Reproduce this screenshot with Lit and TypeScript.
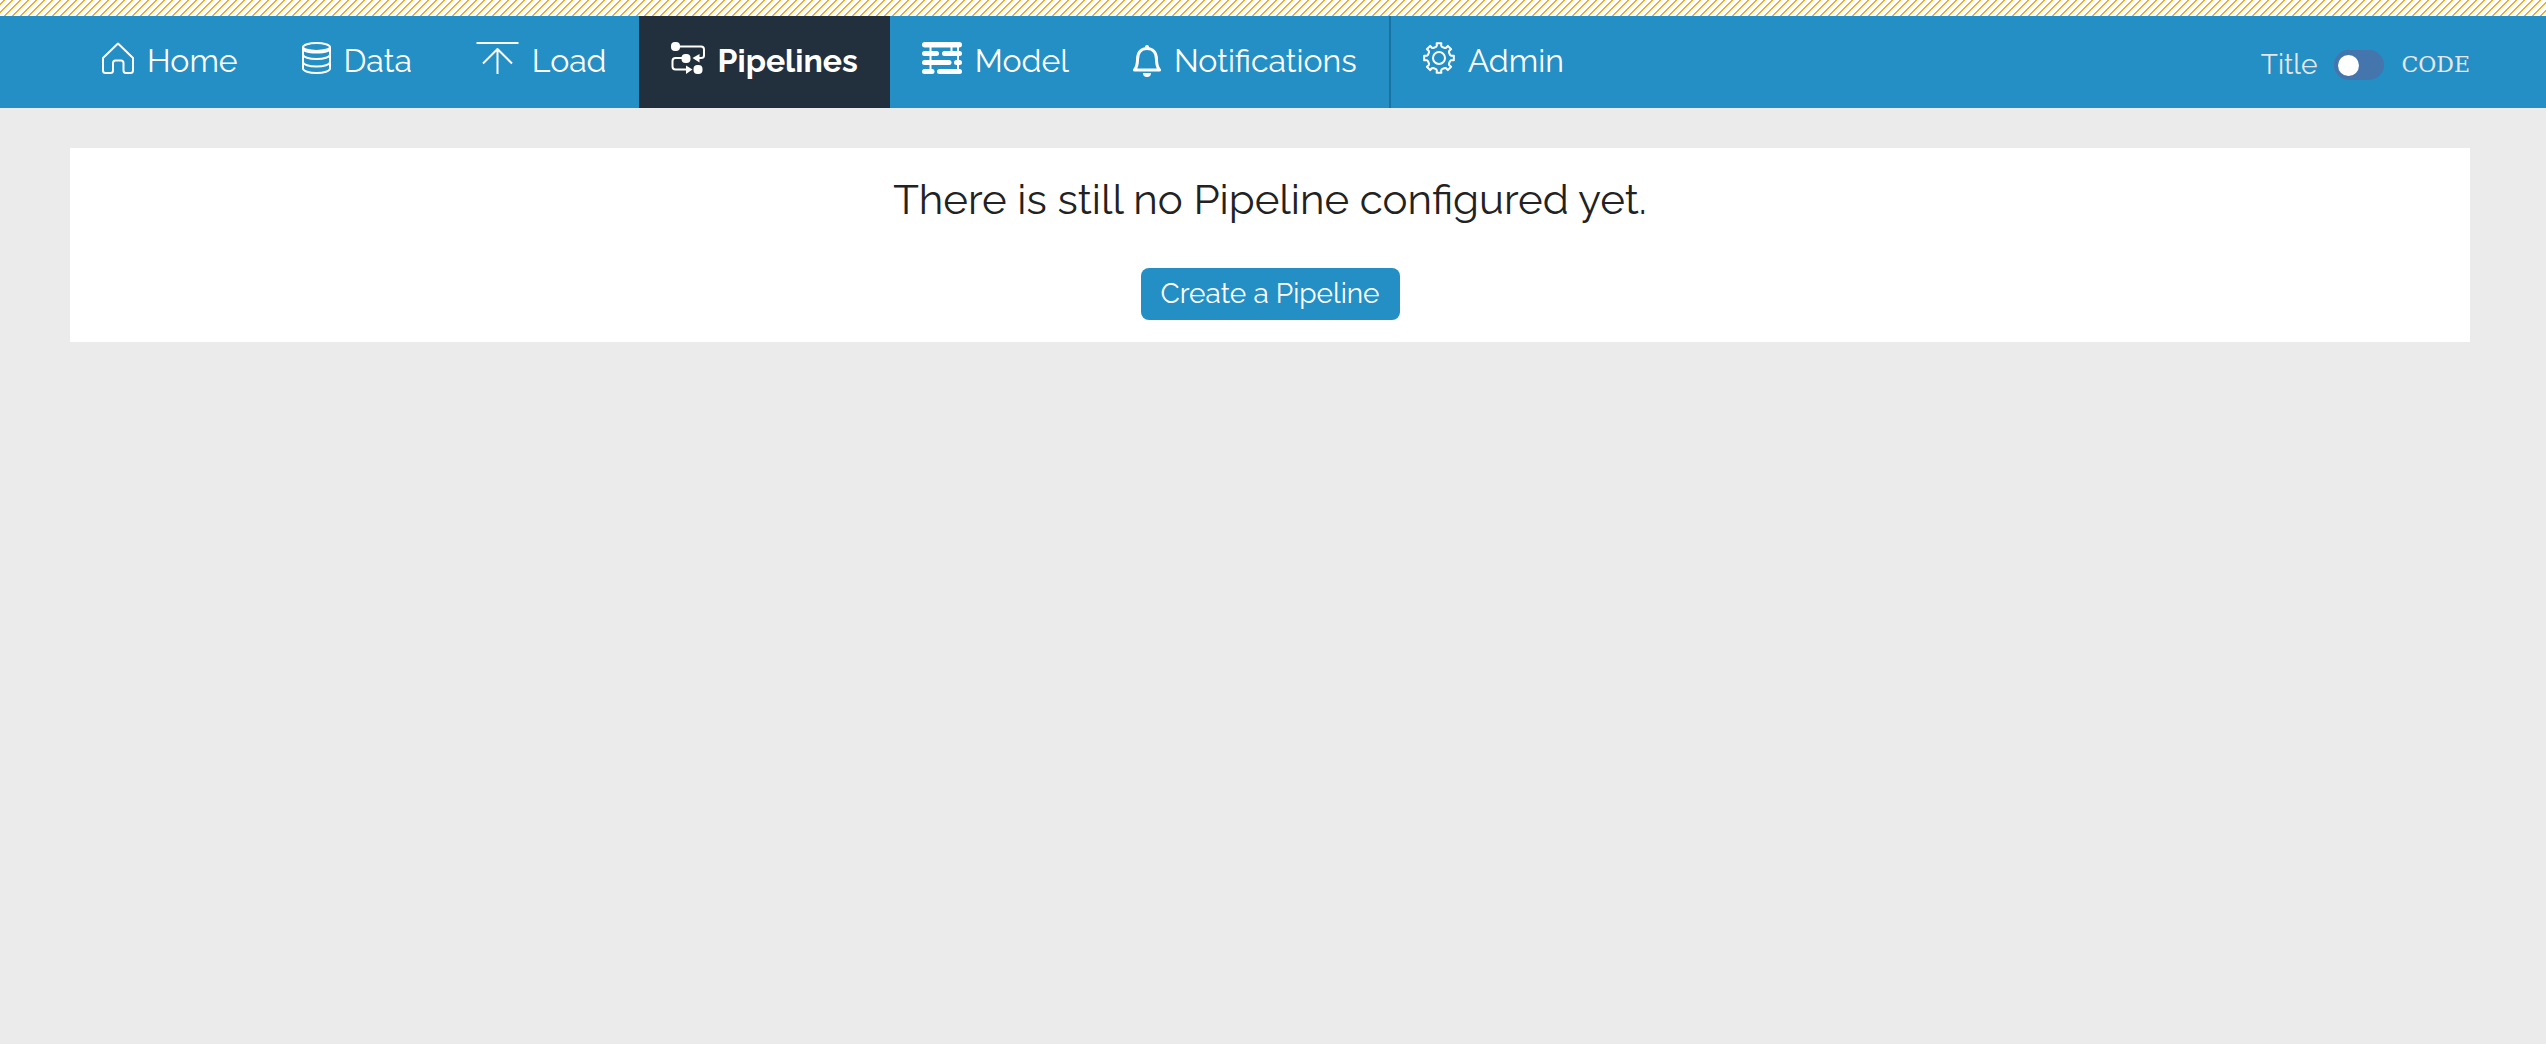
import { LitElement, html, css, svg, nothing, TemplateResult } from "lit";
import { customElement, state } from "lit/decorators.js";
import { classMap } from "lit/directives/class-map.js";

interface NavItem {
  id: string;
  label: string;
  icon: TemplateResult;
  divided?: boolean;
}

const homeIcon = html`<svg class="icon" width="32" height="32" viewBox="0 0 32 32" aria-hidden="true">
  <path d="M1 16 16 1.500 31 16v12.500q0 2.500-2.500 2.500H24q-2.500 0-2.500-2.500V21q0-2.500-2.500-2.500h-5.500q-2.500 0-2.500 2.500v7.500q0 2.500-2.500 2.500H3.500Q1 31 1 28.500z" />
</svg>`;

const dataIcon = html`<svg class="icon" width="29" height="32" viewBox="0 0 29 32" aria-hidden="true">
  <ellipse cx="14.500" cy="5" rx="13.500" ry="4" />
  <path d="M1 5v21.500C1 29 7 31 14.500 31S28 29 28 26.500V5M1 6.500C1 9 7 10.500 14.500 10.500S28 9 28 6.500M1 12.500c0 2.500 6 4.500 13.500 4.500S28 15 28 12.500M1 20c0 2.500 6 4.500 13.500 4.500S28 22.500 28 20" />
</svg>`;

const loadIcon = html`<svg class="icon" width="43" height="32" viewBox="0 0 43 32" aria-hidden="true">
  <path d="M.5 1h42M21.500 32V7M7 21.500 21.500 7 36 21.500" />
</svg>`;

const pipelinesIcon = html`<svg class="icon" width="34" height="32" viewBox="0 0 34 32" aria-hidden="true">
  <path d="M5 4.500h25q3 0 3 3v6q0 2.500-3 2.500h-3M12 16H4.500q-3 0-3 3v5.500q0 3 3 3H16" />
  <g class="solid">
    <rect x="0" y="0" width="9" height="9" rx="4" />
    <rect x="10.500" y="12" width="9" height="9" rx="4" />
    <rect x="22.500" y="23" width="9" height="9" rx="4" />
    <path d="M28.500 12v8.500L21.500 16zM15 23.500v8.500l6.500-4.500z" />
  </g>
</svg>`;

const modelIcon = html`<svg class="icon" width="40" height="32" viewBox="0 0 40 32" aria-hidden="true">
  <path d="M8.500 3v26M29.500 3v8M36 3v26" />
  <g class="solid">
    <rect x="0" y="0" width="40" height="5.500" rx="2.750" />
    <rect x="0" y="9" width="17" height="5" rx="2.500" />
    <rect x="20" y="9" width="20" height="5" rx="2.500" />
    <rect x="0" y="18" width="29.500" height="5" rx="2.500" />
    <rect x="32" y="18" width="8" height="5" rx="2.500" />
    <rect x="0" y="27" width="12.500" height="5" rx="2.500" />
    <rect x="15" y="27" width="25" height="5" rx="2.500" />
  </g>
</svg>`;

const bellIcon = html`<svg class="icon bell" width="28" height="32" viewBox="0 0 28 32" aria-hidden="true">
  <path d="M1.500 25C4 22 4.500 19 4.500 14.500 4.500 8 8 3.500 14 3.500S23.500 8 23.500 14.500C23.500 19 24 22 26.500 25z" />
  <g class="solid">
    <rect x="12" y="0" width="4" height="4" rx="2" />
    <path d="M10 28h8q0 4-4 4t-4-4z" />
  </g>
</svg>`;

const gearTeeth = (() => {
  const points: string[] = [];
  for (let tooth = 0; tooth < 8; tooth++) {
    const centre = tooth * 45;
    for (const [angle, radius] of [[-15, 11.5], [-10, 12.5], [-9, 15], [9, 15], [10, 12.5], [15, 11.5]]) {
      const rad = ((centre + angle) * Math.PI) / 180;
      points.push(`${(16 + radius * Math.sin(rad)).toFixed(2)},${(16 - radius * Math.cos(rad)).toFixed(2)}`);
    }
  }
  return points.join(" ");
})();

const gearIcon = html`<svg class="icon" width="32" height="32" viewBox="0 0 32 32" aria-hidden="true">
  ${svg`<polygon points=${gearTeeth} />`}
  <circle cx="16" cy="16" r="6" />
</svg>`;

const NAV: NavItem[] = [
  { id: "home", label: "Home", icon: homeIcon },
  { id: "data", label: "Data", icon: dataIcon },
  { id: "load", label: "Load", icon: loadIcon },
  { id: "pipelines", label: "Pipelines", icon: pipelinesIcon },
  { id: "model", label: "Model", icon: modelIcon },
  { id: "notifications", label: "Notifications", icon: bellIcon },
  { id: "admin", label: "Admin", icon: gearIcon, divided: true },
];

@customElement("app-root")
export class AppRoot extends LitElement {
  @state() private current = "pipelines";
  @state() private showCode = false;

  static styles = css`
    :host {
      display: block;
      min-height: 100vh;
      background: #ebebeb;
      color: #222;
      font-family: Raleway, Lato, "Open Sans", sans-serif;
      font-weight: 400;
    }
    .stripes {
      height: 16px;
      background: linear-gradient(
          135deg,
          #fff 18.75%,
          #f6a828 18.75% 31.25%,
          #fff 31.25% 68.75%,
          #f6a828 68.75% 81.25%,
          #fff 81.25%
        )
        0 0 / 8px 8px;
    }
    .bar {
      display: flex;
      justify-content: space-between;
      min-height: 92px;
      padding: 0 76px 0 70px;
      background: #248fc5;
    }
    .nav {
      display: flex;
    }
    .link {
      display: flex;
      align-items: center;
      gap: 13px;
      padding: 0 32px 2px;
      color: #fff;
      font-size: 32px;
      line-height: 40px;
      text-decoration: none;
    }
    .link.active {
      background: #22303d;
      font-weight: 700;
    }
    .link.divided {
      border-left: 2px solid #1a72a0;
    }
    .icon {
      flex: none;
      margin-bottom: 6px;
      fill: none;
      stroke: currentColor;
      stroke-width: 2;
      stroke-linejoin: round;
    }
    .bell {
      margin-bottom: 0;
      stroke-width: 3;
    }
    .solid {
      fill: currentColor;
      stroke: none;
    }
    .mode {
      display: flex;
      align-items: center;
      gap: 17px;
      padding-top: 6px;
      color: #e6e6e6;
      font-size: 28px;
      line-height: 36px;
      cursor: pointer;
    }
    .code {
      font-family: "DejaVu Serif", "Courier New", monospace;
      font-size: 22px;
    }
    .toggle {
      appearance: none;
      display: flex;
      align-items: center;
      box-sizing: border-box;
      width: 50px;
      height: 30px;
      margin: 0;
      padding: 0 4px;
      border-radius: 15px;
      background: #4575ad;
      cursor: pointer;
    }
    .toggle::before {
      content: "";
      width: 21px;
      height: 21px;
      border-radius: 50%;
      background: #fff;
    }
    .toggle:checked {
      justify-content: flex-end;
    }
    .content {
      padding: 40px 76px 40px 70px;
    }
    .card {
      display: flex;
      flex-direction: column;
      align-items: center;
      gap: 40px;
      padding: 24px 32px 22px;
      background: #fff;
    }
    .title {
      margin: 0;
      font-size: 42px;
      font-weight: inherit;
      line-height: 56px;
    }
    .create {
      padding: 8px 20px;
      border: 0;
      border-radius: 8px;
      background: #248fc5;
      color: #fff;
      font-family: inherit;
      font-size: 28px;
      font-weight: inherit;
      line-height: 36px;
      cursor: pointer;
    }
  `;

  private select(event: Event, id: string) {
    event.preventDefault();
    this.current = id;
  }

  private renderLink(item: NavItem) {
    const active = item.id === this.current;
    return html`<a
      class=${classMap({ link: true, active, divided: !!item.divided })}
      href="#${item.id}"
      aria-current=${active ? "page" : nothing}
      @click=${(event: Event) => this.select(event, item.id)}
      >${item.icon}<span>${item.label}</span></a
    >`;
  }

  render() {
    return html`
      <div class="stripes"></div>
      <header class="bar">
        <nav class="nav">${NAV.map((item) => this.renderLink(item))}</nav>
        <label class="mode">
          <span>Title</span>
          <input
            class="toggle"
            type="checkbox"
            role="switch"
            .checked=${this.showCode}
            @change=${(event: Event) => (this.showCode = (event.target as HTMLInputElement).checked)}
          />
          <span class="code">CODE</span>
        </label>
      </header>
      <main class="content">
        <section class="card">
          <h1 class="title">There is still no Pipeline configured yet.</h1>
          <button class="create" type="button">Create a Pipeline</button>
        </section>
      </main>
    `;
  }
}
